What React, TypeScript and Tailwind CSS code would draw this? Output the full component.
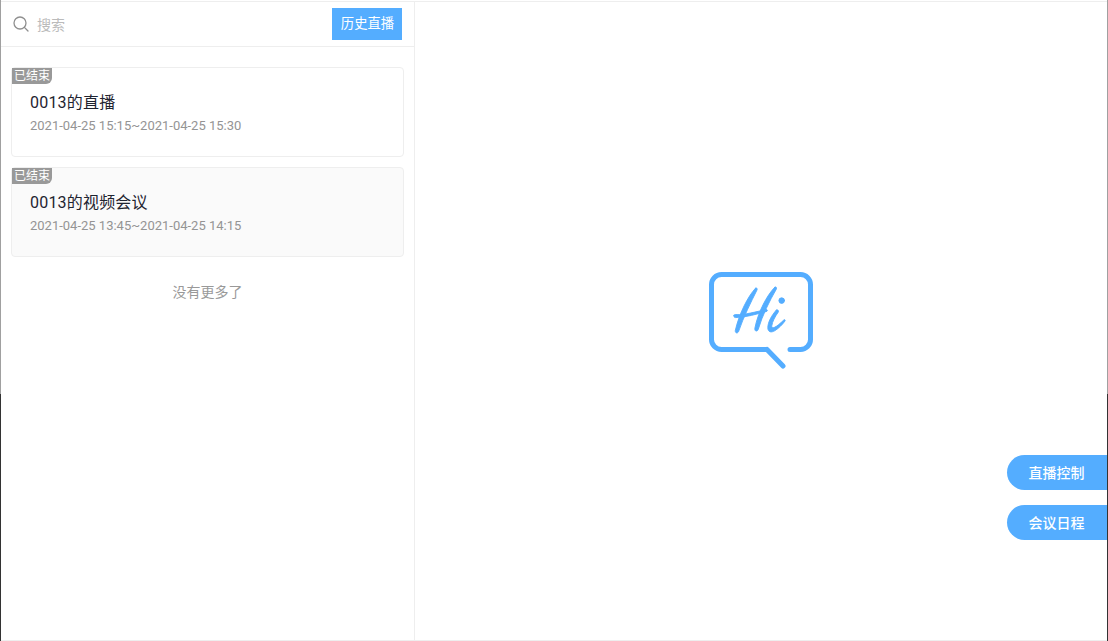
const cjk = "font-['Roboto','Noto_Sans_CJK_SC',sans-serif]"

interface LiveItem {
  title: string
  time: string
  shaded?: boolean
}

const items: LiveItem[] = [
  { title: '0013的直播', time: '2021-04-25 15:15~2021-04-25 15:30' },
  { title: '0013的视频会议', time: '2021-04-25 13:45~2021-04-25 14:15', shaded: true },
]

function LiveCard({ item }: { item: LiveItem }) {
  return (
    <div className={`relative h-[90px] rounded border border-[#eeeeee] pl-[18px] pt-[22px] ${item.shaded ? 'bg-[#fafafa]' : 'bg-white'}`}>
      <span className="absolute left-0 top-0 h-4 w-10 whitespace-nowrap rounded-br-md bg-[#999999] pl-[2px] text-xs leading-[17px] text-white">
        已结束
      </span>
      <h3 className="text-base leading-[26px] tracking-[0.2px] text-[#1f2430]">{item.title}</h3>
      <p className="mt-px text-[13px] leading-[18px] text-[#949494]">{item.time}</p>
    </div>
  )
}

function HiLogo() {
  return (
    <svg width="124" height="114" viewBox="0 0 124 114" fill="none" stroke="#54adff" strokeLinecap="round" strokeLinejoin="round">
      {/* Bubble */}
      <path strokeWidth="5" d="M67 87.5H21.5a10 10 0 0 1-10-10V22.5a10 10 0 0 1 10-10h79a10 10 0 0 1 10 10v55a10 10 0 0 1-10 10H90M67 87.5 83 104" />
      {/* Hi */}
      <g fill="#54adff" stroke="#54adff" strokeWidth="0.9">
        <path d="M55.5 26.2C48 34 39 52 35.3 68.5C35 71.5 37.8 71.5 38.6 69.5C43.5 55 51 40 57 28C57.6 26.4 56.6 25.4 55.5 26.2Z" />
        <path d="M74.8 25.2C67 33 58 50 54.8 66.5C54.6 69.8 57.4 69.6 58.2 67.5C62.5 53 69.5 39 76.3 27.2C77 25.4 75.8 24.4 74.8 25.2Z" />
        <path d="M34 53.2C33.4 54.4 34.2 55.6 35.6 55.6C46 55.4 57 52 66.8 49.4C67.8 48.6 67.4 47.4 66.2 47.6C56 49.6 45 53 36 52.6C35 52.5 34.4 52.6 34 53.2Z" />
        <path d="M76.2 48.2C71.5 53.5 68 60 67.8 65.5C67.8 70.5 71.5 70.8 75 68.6C78.6 66.4 82.4 62.6 85 59C85.6 58 84.6 57.2 83.8 58C80.6 61 77 64.4 74 65.6C72.4 66.2 71.6 65.4 71.8 63.8C72.4 59.6 75 54.6 78.2 50.2C79.2 48.4 77.4 47.2 76.2 48.2Z" />
        <circle cx="81.7" cy="38.6" r="2.8" />
      </g>
    </svg>
  )
}

export default function App() {
  return (
    <div className={`flex h-[641px] w-[1108px] overflow-hidden bg-white ${cjk}`}>
      <div className="flex w-px flex-col">
        <div className="h-[394px] bg-[#a0a0a0]" />
        <div className="flex-1 bg-[#333333]" />
      </div>

      <div className="relative flex flex-1 flex-col pt-px">
        <div className="flex min-h-0 flex-1 flex-col border-y border-y-[#eeeeee]">
          <div className="flex min-h-0 flex-1">
            {/* Sidebar */}
            <aside className="w-[414px] border-r border-[#eeeeee]">
              <div className="flex h-[45px] items-center border-b border-[#eeeeee] px-3">
                <svg width="16" height="16" viewBox="0 0 16 16" fill="none" stroke="#8f8f8f" strokeWidth="1.3" strokeLinecap="round">
                  <circle cx="7" cy="7" r="6" />
                  <path d="M11.4 11.4 15 15" />
                </svg>
                <span className="ml-2 flex-1 pt-[2px] text-sm text-[#bbbbbb]">搜索</span>
                <button className="h-8 w-[70px] bg-[#54adff] pl-px text-[13.33px] text-white">历史直播</button>
              </div>
              <div className="flex flex-col gap-[10px] px-[10px] pt-5">
                {items.map((item) => (
                  <LiveCard key={item.title} item={item} />
                ))}
              </div>
              <p className="mt-[25px] text-center text-sm leading-5 text-[#999999]">没有更多了</p>
            </aside>

            {/* Main */}
            <main className="flex flex-1 items-center justify-center pb-[5px] pl-[2px]">
              <HiLogo />
            </main>
          </div>
        </div>

        <div className="absolute right-0 top-[455px] flex w-[100px] flex-col gap-[15px]">
          <button className="h-[35px] rounded-l-full bg-[#54adff] pr-[1px] text-sm font-medium text-white">直播控制</button>
          <button className="h-[35px] rounded-l-full bg-[#54adff] pr-[1px] text-sm font-medium text-white">会议日程</button>
        </div>
      </div>

      <div className="flex w-px flex-col">
        <div className="h-[394px] bg-[#a0a0a0]" />
        <div className="flex-1 bg-[#333333]" />
      </div>
    </div>
  )
}
